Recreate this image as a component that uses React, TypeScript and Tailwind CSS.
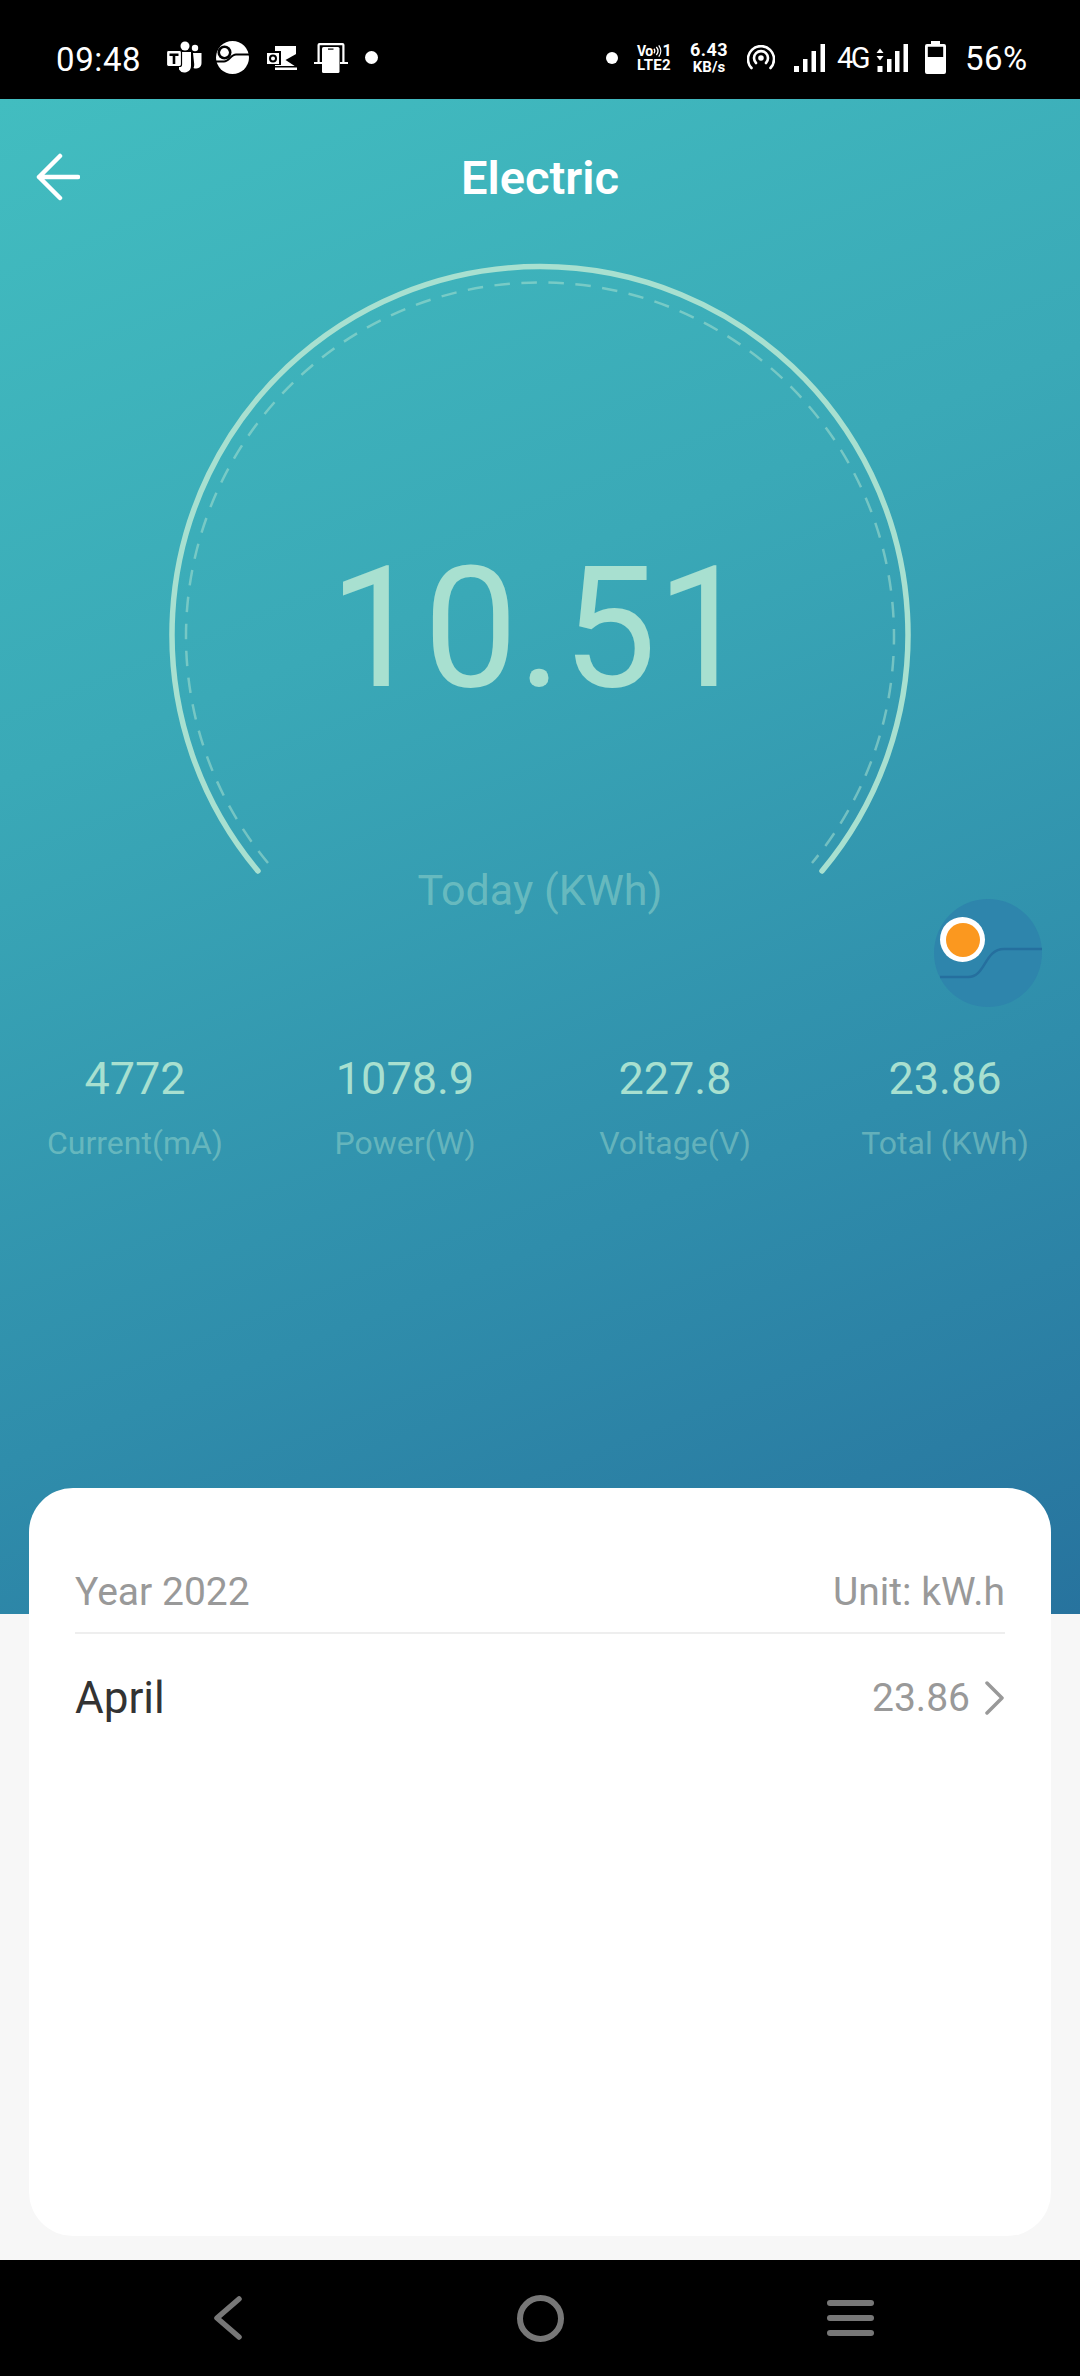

function Stat({ value, label }: { value: string; label: string }) {
  return (
    <div className="flex w-[270px] flex-col items-center">
      <div className="text-[45px] leading-[52px] text-[#a8e0d0]">{value}</div>
      <div className="mt-[18px] text-[32px] leading-[40px] text-[#a8e0d0]/45">{label}</div>
    </div>
  );
}

function Teams() {
  return (
    <svg width="36" height="33" viewBox="0 0 36 33" fill="#fff">
      <circle cx="19" cy="5" r="4.500" />
      <circle cx="29" cy="7" r="3.200" />
      <path d="M13 11h12v14a6.500 6.500 0 0 1-12 3.500z" />
      <path d="M27 12h8.500v10a5.500 5.500 0 0 1-8 5c.7-1.500.7-2.500.7-4z" />
      <rect x="0.500" y="9.500" width="15" height="16" rx="2" stroke="#000" strokeWidth="1.200" />
      <path d="M3.500 12.500h9v2.400H9.300V23H6.700v-8.100H3.500z" fill="#000" />
    </svg>
  );
}

function Disc() {
  return (
    <svg width="33" height="33" viewBox="0 0 33 33" fill="none">
      <circle cx="16.500" cy="16.500" r="16.500" fill="#fff" />
      <circle cx="8.500" cy="11.500" r="7" fill="#000" />
      <circle cx="8.500" cy="11.500" r="4.400" fill="#fff" />
      <path d="M0 20.500h8c5 0 7-7 12-7h13" stroke="#000" strokeWidth="1.800" />
    </svg>
  );
}

function Outlook() {
  return (
    <svg width="31" height="24" viewBox="0 0 31 24" fill="#fff">
      <rect x="9" y="0" width="21" height="20" />
      <rect x="0" y="5" width="15" height="14" fill="#000" />
      <rect x="1" y="7" width="12" height="11" />
      <circle cx="7" cy="12.500" r="3" fill="none" stroke="#000" strokeWidth="2" />
      <path d="M19.500 14 31 7.500v14z" fill="#000" />
      <rect x="9" y="21.500" width="22" height="2.500" />
    </svg>
  );
}

function PhoneLink() {
  return (
    <svg width="34" height="31" viewBox="0 0 34 31" fill="#fff">
      <path d="M3.500 20V3a2 2 0 0 1 2-2h23a2 2 0 0 1 2 2v17h-2.200V3.200H5.700V20z" />
      <rect x="0" y="20" width="8" height="2" />
      <rect x="26" y="20" width="8" height="2" />
      <rect x="8" y="5" width="17.500" height="26" rx="1.500" />
      <rect x="14" y="6.500" width="5.500" height="1.200" fill="#000" />
    </svg>
  );
}

function Hotspot() {
  return (
    <svg width="28" height="26" viewBox="0 0 28 26" fill="none" stroke="#fff" strokeWidth="2.600" strokeLinecap="round">
      <circle cx="14" cy="13" r="2.800" fill="#fff" stroke="none" />
      <path d="M9 18a7 7 0 1 1 10 0" />
      <path d="M4.500 23a13 13 0 1 1 19 0" />
    </svg>
  );
}

function Bars({ arrows }: { arrows?: boolean }) {
  return (
    <svg width={arrows ? 32 : 31} height="28" viewBox={arrows ? "0 0 32 28" : "0 0 31 28"} fill="#fff">
      {arrows ? (
        <>
          <path d="M0.500 9 4 4.500 7.500 9z" />
          <path d="M0.500 12 4 16.500 7.500 12z" />
          <rect x="1.500" y="22" width="5" height="6" />
          <rect x="11" y="15" width="4.500" height="13" />
          <rect x="19" y="7" width="4.500" height="21" />
          <rect x="27.500" y="0" width="4.500" height="28" />
        </>
      ) : (
        <>
          <rect x="0" y="22" width="5" height="6" />
          <rect x="9" y="15" width="4.500" height="13" />
          <rect x="17.500" y="7" width="4.500" height="21" />
          <rect x="26.500" y="0" width="4.500" height="28" />
        </>
      )}
    </svg>
  );
}

function Battery() {
  return (
    <svg width="21" height="33" viewBox="0 0 21 33" fill="#fff">
      <rect x="6" y="0" width="9" height="3" />
      <path d="M2 3h17a2 2 0 0 1 2 2v26a2 2 0 0 1-2 2H2a2 2 0 0 1-2-2V5a2 2 0 0 1 2-2zM2.800 5.800V16h15.400V5.800z" fillRule="evenodd" />
    </svg>
  );
}

function Waves() {
  return (
    <svg className="shrink-0" width="9" height="14" viewBox="0 0 10 14" fill="none" stroke="#fff" strokeWidth="1.500">
      <path d="M1 4.500a4 4 0 0 1 0 5M3.700 2.500a7 7 0 0 1 0 9M6.400 0.800a10 10 0 0 1 0 12.400" />
    </svg>
  );
}

function StatusBar() {
  return (
    <div className="flex h-[99px] shrink-0 items-center bg-black pl-[56px] pt-[16px] text-white">
      <span className="mt-[4px] w-[84px] text-[33px] font-normal leading-[38px] tracking-[0.6px]">09:48</span>
      <span className="ml-[26px] flex"><Teams /></span>
      <span className="ml-[14px] flex"><Disc /></span>
      <span className="ml-[17px] flex"><Outlook /></span>
      <span className="ml-[17px] flex"><PhoneLink /></span>
      <span className="ml-[17px] h-[13px] w-[13px] rounded-full bg-white" />
      <span className="ml-[228px] h-[12px] w-[12px] rounded-full bg-white" />
      <div className="ml-[19px] flex w-[36px] flex-col font-bold leading-[14px]">
        <span className="flex items-center whitespace-nowrap text-[14px] tracking-[-0.6px]">Vo<Waves /><span className="ml-[1px] text-[16px]">1</span></span>
        <span className="whitespace-nowrap text-[15px] tracking-[0.3px]">LTE2</span>
      </div>
      <div className="ml-[17px] flex w-[38px] flex-col items-center font-bold">
        <span className="text-[18px] leading-[18px] tracking-[0.4px]">6.43</span>
        <span className="mt-[1px] text-[15px] leading-[15px]">KB/s</span>
      </div>
      <span className="ml-[19px] flex"><Hotspot /></span>
      <span className="ml-[19px] flex"><Bars /></span>
      <span className="ml-[12px] mt-[1px] w-[29px] text-[29px] leading-[32px] tracking-[-2.500px]">4G</span>
      <span className="ml-[10px] flex"><Bars arrows /></span>
      <span className="ml-[17px] flex"><Battery /></span>
      <span className="ml-[19px] mt-[2px] text-[33px] font-normal leading-[38px] tracking-[0.5px]">56%</span>
    </div>
  );
}

function Trend() {
  return (
    <div className="absolute left-[934px] top-[800px] h-[108px] w-[108px] rounded-full bg-[#2e85ac]">
      <svg className="absolute inset-0" width="108" height="108" viewBox="0 0 108 108" fill="none">
        <path d="M6 78h28c18 0 16-28 36-28h38" stroke="#256f9e" strokeWidth="2.500" />
      </svg>
      <div className="absolute left-[6px] top-[18px] flex h-[45px] w-[45px] items-center justify-center rounded-full bg-white">
        <div className="h-[34px] w-[34px] rounded-full bg-[#fb981f]" />
      </div>
    </div>
  );
}

export default function App() {
  return (
    <div className="flex h-[2376px] w-[1080px] flex-col overflow-hidden bg-[#f7f7f7] font-['Roboto',sans-serif]">
      <StatusBar />
      <div className="relative h-[1515px] shrink-0 bg-[linear-gradient(158deg,#42bdc0_0%,#3aa9b7_35%,#2f8dab_70%,#27739e_100%)]">
        <div className="relative flex h-[144px] justify-center pt-[51px]">
          <svg className="absolute left-[36px] top-[54px]" width="44" height="48" viewBox="0 0 44 48" fill="none" stroke="#fff" strokeWidth="4.500" strokeLinecap="round" strokeLinejoin="round">
            <path d="M42 24H3M24 3 3 24l21 21" />
          </svg>
          <span className="text-[47px] font-semibold leading-[56px] text-white">Electric</span>
        </div>
        <div className="relative flex flex-col items-center">
          <svg className="absolute left-[161px] top-[1px]" width="758" height="640" viewBox="0 0 758 640" fill="none">
            <path d="M97 627 A368 368 0 1 1 661 627" stroke="#a8e0d0" strokeWidth="5.500" strokeLinecap="round" />
            <path d="M107 619 A354 354 0 1 1 651 619" stroke="#a8e0d0" strokeOpacity="0.55" strokeWidth="2.500" strokeDasharray="15.500 11.500" />
          </svg>
          <div className="mt-[286px] text-[168px] font-normal leading-[200px] text-[#a8e0d0]">10.51</div>
          <div className="mt-[136px] text-[43px] leading-[50px] text-[#a8e0d0]/45">Today (KWh)</div>
        </div>
        <Trend />
        <div className="relative mt-[138px] flex justify-center">
          <Stat value="4772" label="Current(mA)" />
          <Stat value="1078.9" label="Power(W)" />
          <Stat value="227.8" label="Voltage(V)" />
          <Stat value="23.86" label="Total (KWh)" />
        </div>
      </div>
      <div className="relative -mt-[126px] mx-[29px] flex h-[748px] shrink-0 flex-col rounded-[44px] bg-white px-[46px] pt-[76px]">
        <div className="flex items-end justify-between border-b-2 border-[#eeeeee] pb-[12px] text-[39px] leading-[56px] text-[#999999]">
          <span>Year 2022</span>
          <span>Unit: kW.h</span>
        </div>
        <div className="mt-[34px] flex items-center justify-between">
          <span className="text-[44px] leading-[60px] text-[#333333]">April</span>
          <span className="flex items-center text-[39px] leading-[60px] text-[#999999]">
            23.86
            <svg className="ml-[14px]" width="21" height="34" viewBox="0 0 21 34" fill="none" stroke="#999" strokeWidth="3.500" strokeLinecap="round" strokeLinejoin="round">
              <path d="M3 2l15 15L3 32" />
            </svg>
          </span>
        </div>
      </div>
      <div className="flex-1" />
      <div className="flex h-[116px] shrink-0 items-center bg-black pl-[214px]">
        <svg width="28" height="44" viewBox="0 0 28 44" fill="none" stroke="#777" strokeWidth="5.500" strokeLinecap="round" strokeLinejoin="round">
          <path d="M25 3 3 22l22 19" />
        </svg>
        <div className="ml-[275px] h-[47px] w-[47px] rounded-full border-[6px] border-[#777777]" />
        <div className="ml-[263px] flex w-[47px] flex-col gap-[9px]">
          <div className="h-[6px] rounded-full bg-[#777777]" />
          <div className="h-[6px] rounded-full bg-[#777777]" />
          <div className="h-[6px] rounded-full bg-[#777777]" />
        </div>
      </div>
    </div>
  );
}
